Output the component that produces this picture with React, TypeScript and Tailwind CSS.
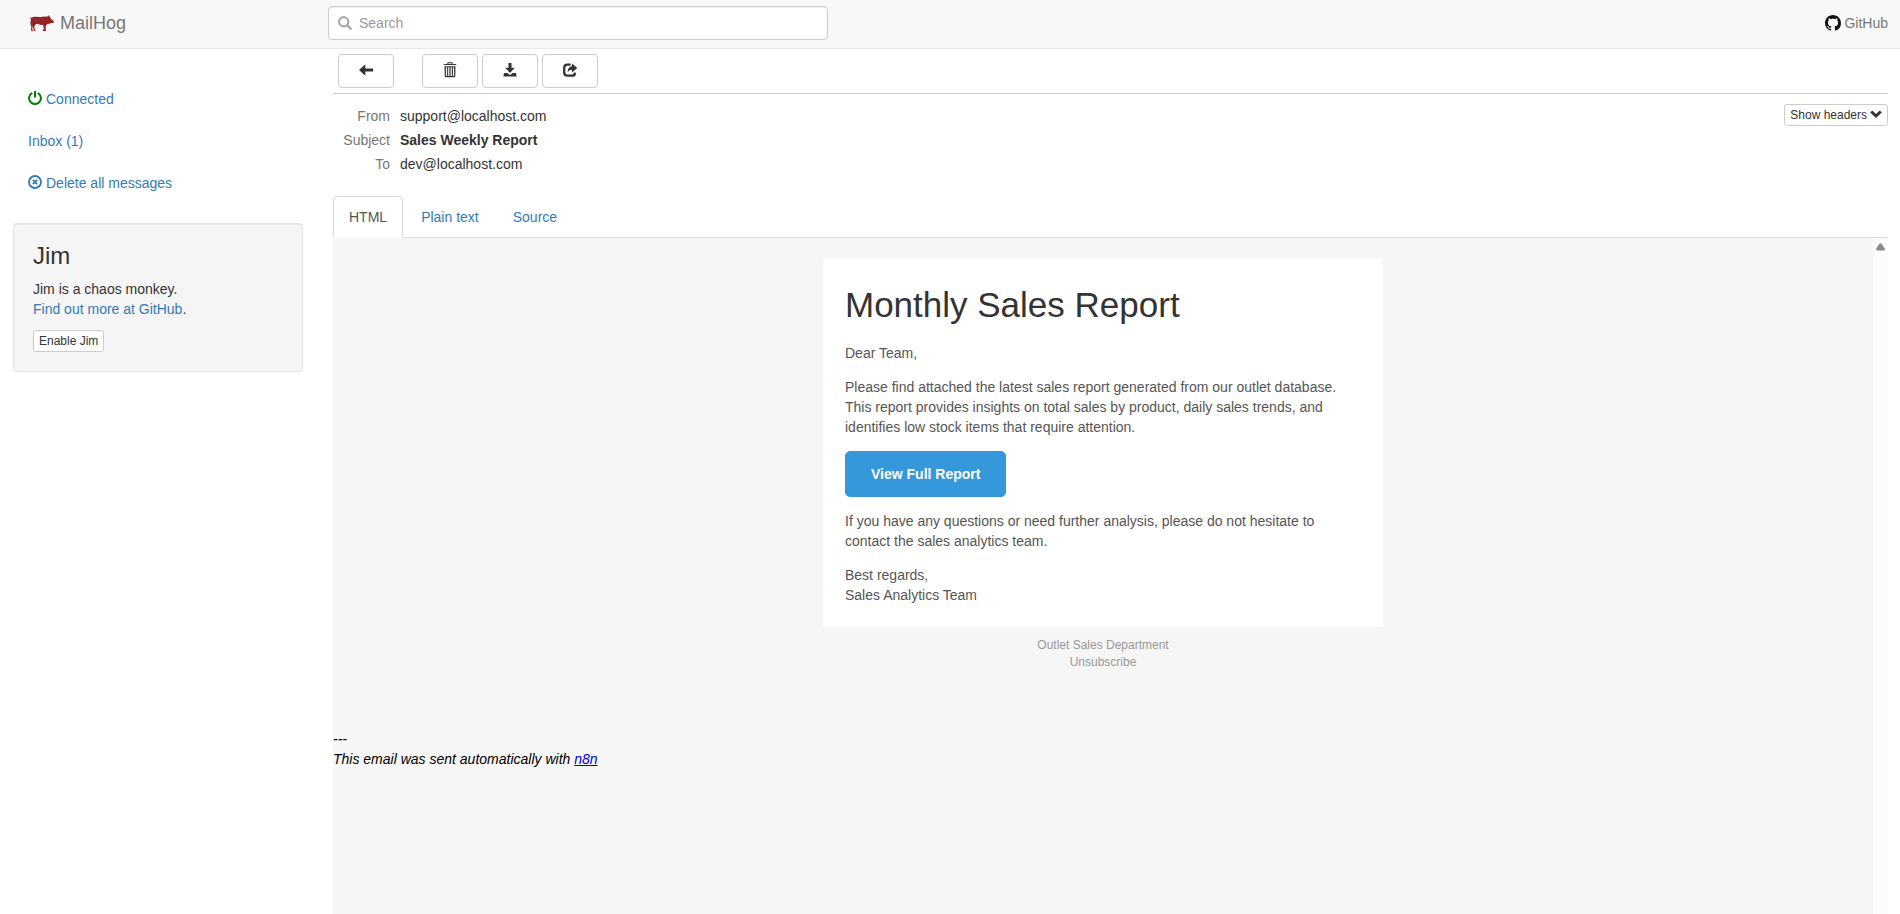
import type { ReactNode } from "react";

function PigLogo() {
  return (
    <svg className="block" width="24" height="17" viewBox="0 0 72 51" fill="#952225" aria-hidden="true">
      <path d="M0 10 L2 7 L4 9 Q7 5 15 5 L32 6 Q42 4 49 5 L52 3 L54 5 L57 0 L60 6 L63 11 L67 15 L71 18 L72 22 L69 24 L64 24 L58 26 L52 27 L49 30 L47 35 L47 42 L48 48 L39 48 L38 46 L41 43 L40 30 Q31 31 24 27 L18 27 L15 31 L13 35 L14 43 L17 48 L12 48 L10 43 L9 33 L7 38 L7 44 L9 49 L5 49 L3 45 L4 34 L1 27 L2 18 L3 12 Z" />
    </svg>
  );
}

function GitHubMark() {
  return (
    <svg className="block" width="16" height="16" viewBox="0 0 16 16" fill="#111" aria-hidden="true">
      <path d="M8 0C3.58 0 0 3.58 0 8c0 3.54 2.29 6.53 5.47 7.59.4.07.55-.17.55-.38 0-.19-.01-.82-.01-1.49-2.01.37-2.53-.49-2.69-.94-.09-.23-.48-.94-.82-1.13-.28-.15-.68-.52-.01-.53.63-.01 1.08.58 1.23.82.72 1.21 1.87.87 2.33.66.07-.52.28-.87.51-1.07-1.78-.2-3.64-.89-3.64-3.95 0-.87.31-1.59.82-2.15-.08-.2-.36-1.02.08-2.12 0 0 .67-.21 2.2.82.64-.18 1.32-.27 2-.27s1.36.09 2 .27c1.53-1.04 2.2-.82 2.2-.82.44 1.1.16 1.92.08 2.12.51.56.82 1.27.82 2.15 0 3.07-1.87 3.75-3.65 3.95.29.25.54.73.54 1.48 0 1.07-.01 1.93-.01 2.2 0 .21.15.46.55.38A8.01 8.01 0 0 0 16 8c0-4.42-3.58-8-8-8z" />
    </svg>
  );
}

function Glyph({ children, className = "" }: { children: ReactNode; className?: string }) {
  return (
    <svg
      className={`block shrink-0 ${className}`}
      width="14"
      height="14"
      viewBox="0 0 14 14"
      fill="currentColor"
      aria-hidden="true"
    >
      {children}
    </svg>
  );
}

const SearchIcon = () => (
  <Glyph>
    <circle cx="5.7" cy="5.7" r="4.6" fill="none" stroke="currentColor" strokeWidth="2.2" />
    <path d="M8.2 9.9 9.9 8.2 14.2 12.5 12.6 14.2Z" />
  </Glyph>
);

const PowerIcon = () => (
  <Glyph className="text-[#008000]">
    <path d="M4.3 1.9A5.9 5.9 0 1 0 9.7 1.9" fill="none" stroke="currentColor" strokeWidth="2" />
    <path d="M6 0h2v6.4H6z" />
  </Glyph>
);

const RemoveCircleIcon = () => (
  <Glyph>
    <circle cx="7" cy="7" r="6" fill="none" stroke="currentColor" strokeWidth="1.8" />
    <path d="M4.8 4.8 9.2 9.2M9.2 4.8 4.8 9.2" stroke="currentColor" strokeWidth="1.9" />
  </Glyph>
);

const ArrowLeftIcon = () => (
  <Glyph>
    <path d="M0 7 6.3 1.2V5.5H14V8.5H6.3V12.8Z" />
  </Glyph>
);

const TrashIcon = () => (
  <svg className="block" width="14" height="16" viewBox="0 0 14 16" fill="currentColor" aria-hidden="true">
    <path
      fillRule="evenodd"
      d="M4.3 2V1.2Q4.3 .2 5.3 .2H8.7Q9.7 .2 9.7 1.2V2H12.4Q13.4 2.2 13.4 3.1H.6Q.6 2.2 1.6 2ZM5.3 2H8.7V1.2H5.3Z"
    />
    <path
      fillRule="evenodd"
      d="M1.5 4.3H12.5L12.3 14.2Q12.2 15.3 11.2 15.3H2.8Q1.8 15.3 1.7 14.2ZM2.9 5.2V14H4.1V5.2ZM5.2 5.2V14H6.4V5.2ZM7.6 5.2V14H8.8V5.2ZM9.9 5.2V14H11.1V5.2Z"
    />
  </svg>
);

const DownloadIcon = () => (
  <Glyph>
    <path d="M5.5 0H8.5V4.8H11.8L7 10 2.2 4.8H5.5Z" />
    <path d="M1 10H4.2L7 12 9.8 10H13L13.6 13.6H.4Z" />
  </Glyph>
);

const ShareIcon = () => (
  <Glyph>
    <path
      d="M7.6 1.7H4.4Q1.2 1.7 1.2 4.9V9.6Q1.2 12.7 4.4 12.7H9Q12 12.7 12.1 9.6"
      fill="none"
      stroke="currentColor"
      strokeWidth="2.3"
    />
    <path d="M9 .6 14.2 5 9 9.4V6.8Q6.4 6.7 4.6 9.2 4.8 3.6 9 3.2Z" />
  </Glyph>
);

const ChevronDownIcon = () => (
  <svg className="block" width="12" height="8" viewBox="0 0 12 8" fill="currentColor" aria-hidden="true">
    <path d="M.2 2.6 2.2.6 6 4 9.8.6 11.8 2.6 6 8Z" />
  </svg>
);

function ToolButton({ label, children }: { label: string; children: ReactNode }) {
  return (
    <button
      type="button"
      aria-label={label}
      title={label}
      className="flex h-[34px] w-14 items-center justify-center rounded border border-[#ccc] bg-white pb-[2px] text-[#333]"
    >
      {children}
    </button>
  );
}

function SideLink({ icon, children }: { icon?: ReactNode; children: ReactNode }) {
  return (
    <li>
      <a href="#" className="flex items-center gap-1 px-[15px] py-[10px] text-[#337ab7]">
        {icon && <span className="pb-[2px]">{icon}</span>}
        <span>{children}</span>
      </a>
    </li>
  );
}

function HeaderRow({ name, children }: { name: string; children: ReactNode }) {
  return (
    <tr className="h-6">
      <th scope="row" className="w-[67px] p-0 pr-[10px] text-right font-normal text-[#777]">
        {name}
      </th>
      <td className="p-0">{children}</td>
    </tr>
  );
}

export default function App() {
  return (
    <div className="flex min-h-screen flex-col bg-white font-['Liberation_Sans',Arial,sans-serif] text-[14px] leading-5 text-[#333]">
      <header className="flex items-center border-b border-[#e7e7e7] bg-[#f8f8f8] pt-[6px] pr-3 pb-2 text-[#777]">
        <div className="w-[328px] shrink-0 pl-[30px]">
          <a href="#" className="flex items-center gap-[6px] text-[18px]">
            <PigLogo />
            <span>MailHog</span>
          </a>
        </div>
        <label className="flex h-[34px] w-[500px] items-center gap-[7px] rounded border border-[#ccc] bg-white px-[9px] text-[#aaa] shadow-[inset_0_1px_1px_rgba(0,0,0,0.075)]">
          <SearchIcon />
          <input
            type="text"
            aria-label="Search"
            placeholder="Search"
            className="min-w-0 flex-1 bg-transparent text-[#555] outline-none placeholder:text-[#999]"
          />
        </label>
        <a href="#" className="ml-auto flex items-center gap-[3px]">
          <GitHubMark />
          <span>GitHub</span>
        </a>
      </header>

      <div className="flex flex-1 gap-[30px] pr-3 pl-[13px]">
        <aside className="w-[290px] shrink-0 pt-[30px]">
          <ul className="flex flex-col gap-[2px]">
            <SideLink icon={<PowerIcon />}>Connected</SideLink>
            <SideLink>Inbox (1)</SideLink>
            <SideLink icon={<RemoveCircleIcon />}>Delete all messages</SideLink>
          </ul>
          <section className="mt-5 rounded border border-[#e3e3e3] bg-[#f5f5f5] p-[19px] shadow-[inset_0_1px_1px_rgba(0,0,0,0.05)]">
            <h3 className="mb-[10px] text-[24px] leading-[26px]">Jim</h3>
            <p className="mb-[11px]">
              Jim is a chaos monkey.
              <br />
              <a href="#" className="text-[#337ab7]">
                Find out more at GitHub
              </a>
              .
            </p>
            <button
              type="button"
              className="block h-[22px] rounded-[3px] border border-[#ccc] bg-white px-[5px] text-[12px] leading-[18px]"
            >
              Enable Jim
            </button>
          </section>
        </aside>

        <main className="flex min-w-0 flex-1 flex-col">
          <div className="flex gap-1 border-b border-[#ccc] px-[5px] py-[5px]">
            <div className="mr-6">
              <ToolButton label="Back">
                <ArrowLeftIcon />
              </ToolButton>
            </div>
            <ToolButton label="Delete">
              <TrashIcon />
            </ToolButton>
            <ToolButton label="Download">
              <DownloadIcon />
            </ToolButton>
            <ToolButton label="Release">
              <ShareIcon />
            </ToolButton>
          </div>

          <div className="flex items-start justify-between pt-[10px] pb-5">
            <table className="border-collapse">
              <tbody>
                <HeaderRow name="From">support@localhost.com</HeaderRow>
                <HeaderRow name="Subject">
                  <strong>Sales Weekly Report</strong>
                </HeaderRow>
                <HeaderRow name="To">dev@localhost.com</HeaderRow>
              </tbody>
            </table>
            <button
              type="button"
              className="flex h-[22px] items-center gap-[3px] rounded-[3px] border border-[#ccc] bg-white px-[5px] text-[12px] leading-[18px]"
            >
              Show headers
              <span className="pb-[2px]">
                <ChevronDownIcon />
              </span>
            </button>
          </div>

          <nav className="flex gap-[2px] border-b border-[#ddd] text-[#337ab7]">
            <a
              href="#"
              aria-current="page"
              className="-mb-px rounded-t border border-[#ddd] border-b-white bg-white px-[15px] py-[10px] text-[#555]"
            >
              HTML
            </a>
            <a href="#" className="px-4 pt-[11px] pb-[10px]">
              Plain text
            </a>
            <a href="#" className="px-4 pt-[11px] pb-[10px]">
              Source
            </a>
          </nav>

          <div className="flex flex-1 bg-[#f6f6f6]">
            <article className="min-w-0 flex-1 pt-5 text-[#555]">
              <div className="mx-auto flex max-w-[560px] flex-col items-start gap-[14px] rounded-[3px] bg-white p-[22px]">
                <h1 className="text-[35px] leading-[49px] text-[#333]">Monthly Sales Report</h1>
                <p>Dear Team,</p>
                <p>
                  Please find attached the latest sales report generated from our outlet database. This report provides
                  insights on total sales by product, daily sales trends, and identifies low stock items that require
                  attention.
                </p>
                <a
                  href="#"
                  className="rounded-[5px] border border-[#3498db] bg-[#3498db] px-[25px] py-3 font-bold text-white"
                >
                  View Full Report
                </a>
                <p>
                  If you have any questions or need further analysis, please do not hesitate to contact the sales
                  analytics team.
                </p>
                <p>
                  Best regards,
                  <br />
                  Sales Analytics Team
                </p>
              </div>
              <footer className="mt-[10px] text-center text-[12px] leading-[17px] text-[#999]">
                <p>Outlet Sales Department</p>
                <a href="#">Unsubscribe</a>
              </footer>
              <p className="mt-[58px] text-black italic">
                ---
                <br />
                This email was sent automatically with{" "}
                <a href="#" className="text-[#0000ee] underline">
                  n8n
                </a>
              </p>
            </article>
            <div className="w-[15px] shrink-0 bg-[#fcfcfc] pt-[5px]" aria-hidden="true">
              <svg className="mx-auto block" width="9" height="8" viewBox="0 0 9 8" fill="#8b8b8b">
                <path d="M3.6.6Q4.5-.2 5.4.6L8.8 5.6Q9.2 7.4 7.8 7.4H1.2Q-.2 7.4.2 5.6Z" />
              </svg>
            </div>
          </div>
        </main>
      </div>
    </div>
  );
}
